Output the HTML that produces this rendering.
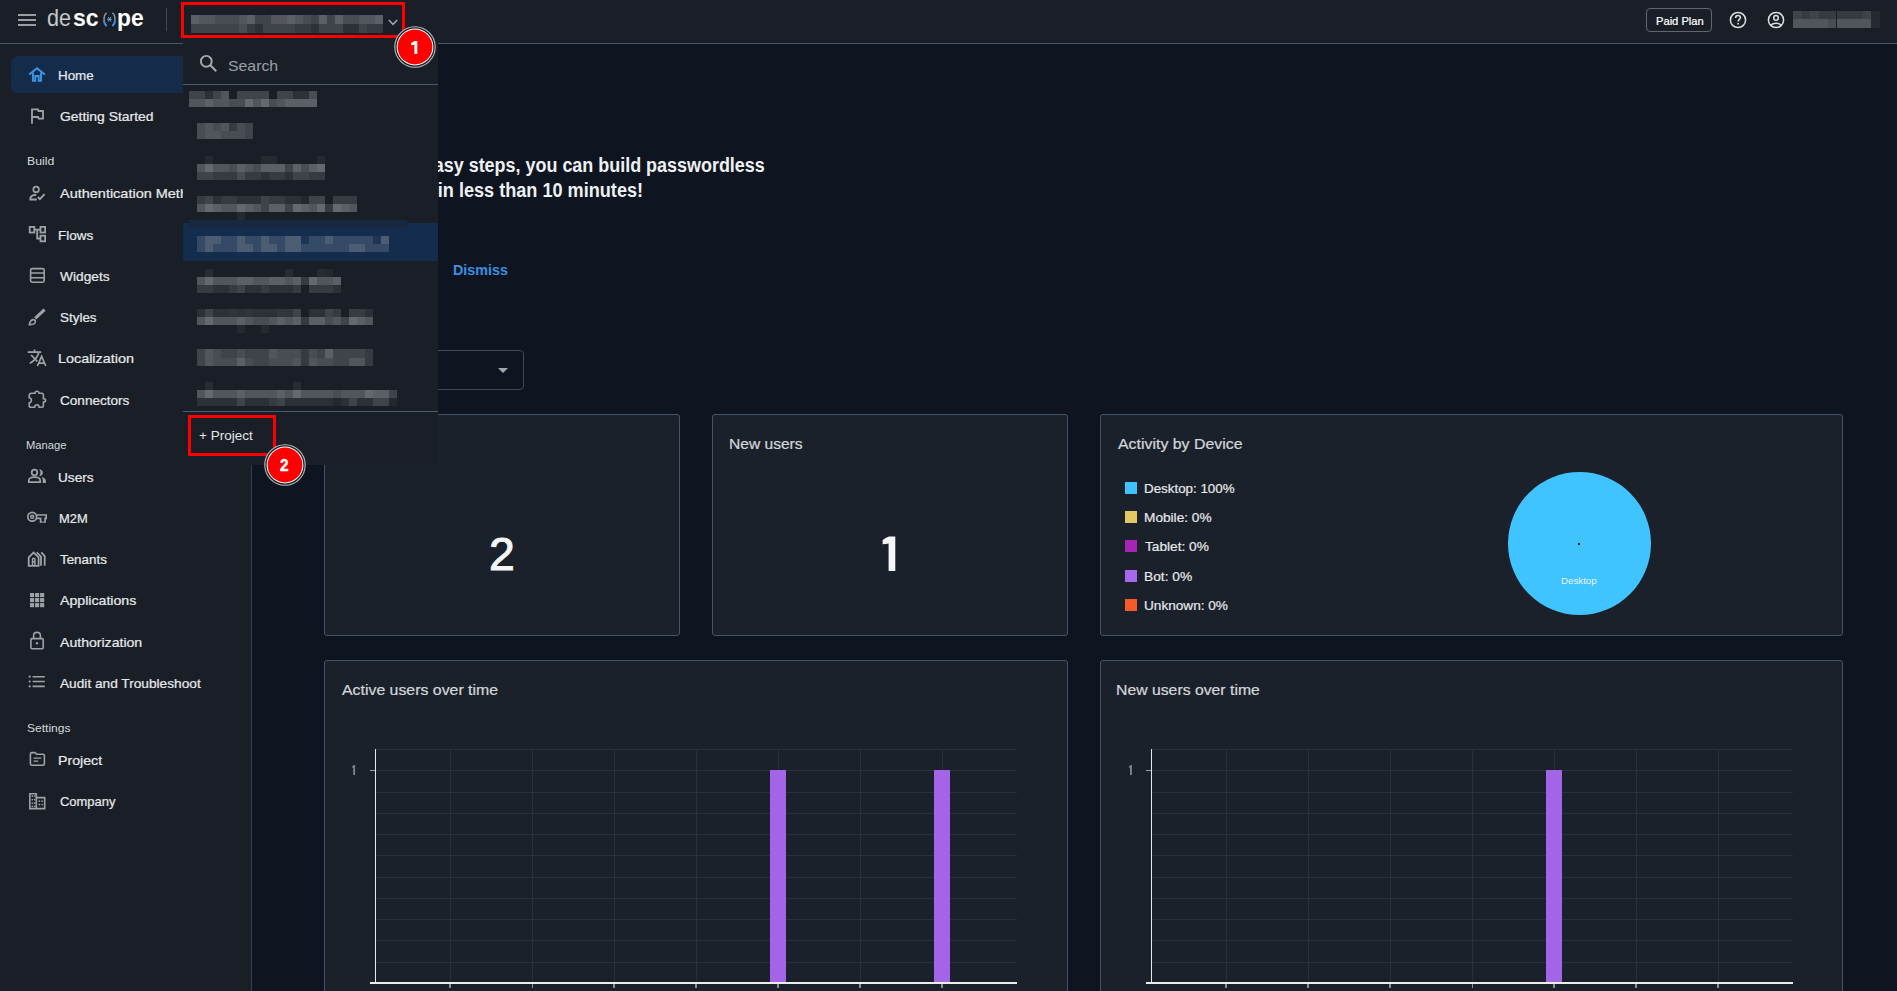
<!DOCTYPE html>
<html><head><meta charset="utf-8">
<style>
*{box-sizing:border-box;margin:0;padding:0}
html,body{width:1897px;height:991px;overflow:hidden;background:#0f1520;font-family:"Liberation Sans",sans-serif;position:relative}
.a{position:absolute}
.t{position:absolute;white-space:pre;transform-origin:0 0;font-family:"Liberation Sans",sans-serif}
.b{position:absolute}
svg{position:absolute;overflow:visible}
</style></head><body>
<!-- header -->
<div class="a" style="left:0;top:0;width:1897px;height:43px;background:#1a1f27"></div>
<div class="a" style="left:0;top:43px;width:1897px;height:1px;background:#46576a"></div>
<!-- sidebar -->
<div class="a" style="left:0;top:44px;width:251px;height:947px;background:#1a1f27"></div>
<div class="a" style="left:251px;top:44px;width:1px;height:947px;background:#34414f"></div>
<!-- hamburger -->
<div class="a" style="left:18px;top:14px;width:18px;height:2px;background:#9a9ea4"></div>
<div class="a" style="left:18px;top:19px;width:18px;height:2px;background:#9a9ea4"></div>
<div class="a" style="left:18px;top:24px;width:18px;height:2px;background:#9a9ea4"></div>
<!-- logo -->
<div class="t" style="left:46.6px;top:6.2px;font-size:24px;line-height:24px;font-weight:400;color:#c4c8cc;transform:scale(0.9,1.0)">de</div>
<div class="t" style="left:73.2px;top:6.2px;font-size:24px;line-height:24px;font-weight:700;color:#ffffff;transform:scale(0.96,1.0)">sc</div>
<div class="t" style="left:117.2px;top:6.2px;font-size:24px;line-height:24px;font-weight:700;color:#ffffff;transform:scale(0.95,1.0)">pe</div>
<svg style="left:101.5px;top:11.8px" width="15" height="15" viewBox="0 0 15 15">
 <path d="M4.6 0.8 C1.2 3.2 1.2 11.3 4.6 13.9" fill="none" stroke="#8d9298" stroke-width="1.5"/>
 <path d="M1.9 8.8 C2.2 11.2 3.1 12.8 4.6 13.9" fill="none" stroke="#2f8ee8" stroke-width="1.8"/>
 <path d="M10.4 0.8 C13.8 3.2 13.8 11.3 10.4 13.9" fill="none" stroke="#8d9298" stroke-width="1.5"/>
 <path d="M13.1 8.8 C12.8 11.2 11.9 12.8 10.4 13.9" fill="none" stroke="#2f8ee8" stroke-width="1.8"/>
 <path d="M5.2 7.3 H9.8 M6.2 5 L8.8 9.6 M8.8 5 L6.2 9.6" stroke="#63b6f2" stroke-width="0.9"/>
</svg>
<div class="a" style="left:166px;top:8px;width:1px;height:23px;background:#3d4a57"></div>

<!-- top right -->
<div class="a" style="left:1646px;top:8px;width:66px;height:24px;border:1px solid #62666c;border-radius:4px"></div>
<svg style="left:1729px;top:11px" width="18" height="18" viewBox="0 0 18 18">
 <circle cx="9" cy="9" r="7.6" fill="none" stroke="#dcdfe2" stroke-width="1.5"/>
 <path d="M6.6 6.9 C6.6 5.4 7.7 4.6 9 4.6 C10.4 4.6 11.4 5.5 11.4 6.7 C11.4 8.3 9.2 8.5 9.2 10.6" fill="none" stroke="#dcdfe2" stroke-width="1.5"/>
 <rect x="8.35" y="11.9" width="1.6" height="1.6" fill="#dcdfe2"/>
</svg>
<svg style="left:1767px;top:11px" width="18" height="18" viewBox="0 0 18 18">
 <circle cx="9" cy="9" r="7.6" fill="none" stroke="#dcdfe2" stroke-width="1.5"/>
 <circle cx="9" cy="6.9" r="2.3" fill="none" stroke="#dcdfe2" stroke-width="1.5"/>
 <path d="M3.6 14.2 C5 12.8 7 12.2 9 12.2 C11 12.2 13 12.8 14.4 14.2" fill="none" stroke="#dcdfe2" stroke-width="1.5"/>
</svg>

<!-- sidebar active -->
<div class="a" style="left:11px;top:56px;width:200px;height:37px;background:#142b49;border-radius:6px"></div>

<!-- sidebar icons -->
<svg style="left:24px;top:60px" width="30" height="30" viewBox="0 0 30 30">
 <path d="M5.2 14.6 L13 8.2 L20.8 14.6" fill="none" stroke="#3b97ea" stroke-width="1.9"/>
 <path d="M9 12.6 V20.7 H11.3 V16 H14.7 V20.7 H17 V12.6" fill="none" stroke="#3b97ea" stroke-width="1.9"/>
</svg>
<svg style="left:28px;top:106px" width="18" height="20" viewBox="0 0 18 20">
 <path d="M4 17.7 V3.3 H10 L10.5 5 H15 V12.6 H10.6 L10.1 11 H4" fill="none" stroke="#9ea2a8" stroke-width="1.8"/>
</svg>
<svg style="left:28px;top:185px" width="18" height="16" viewBox="0 0 18 16">
 <circle cx="8.1" cy="4.4" r="2.8" fill="none" stroke="#9ea2a8" stroke-width="1.7"/>
 <path d="M8.3 9.8 C5.6 9.8 2.4 11 2.4 13.3 V14.5 H8.8" fill="none" stroke="#9ea2a8" stroke-width="1.9"/>
 <path d="M9.9 12 L11.9 14.2 L16.6 9.2" fill="none" stroke="#9ea2a8" stroke-width="1.9"/>
</svg>
<svg style="left:28px;top:225px" width="18" height="18" viewBox="0 0 18 18">
 <rect x="1.7" y="1.9" width="4.6" height="5.6" fill="none" stroke="#9ea2a8" stroke-width="1.8"/>
 <rect x="12.5" y="1.9" width="4.6" height="5.6" fill="none" stroke="#9ea2a8" stroke-width="1.8"/>
 <rect x="12.5" y="10.7" width="4.6" height="5.6" fill="none" stroke="#9ea2a8" stroke-width="1.8"/>
 <path d="M6.3 4.7 H12.5 M9.2 4.7 V13.5 H12.5" fill="none" stroke="#9ea2a8" stroke-width="1.8"/>
</svg>
<svg style="left:28px;top:266px" width="18" height="18" viewBox="0 0 18 18">
 <rect x="2.6" y="2.6" width="13.6" height="13.6" rx="1.6" fill="none" stroke="#9ea2a8" stroke-width="1.6"/>
 <path d="M2.6 7.1 H16.2 M2.6 11.7 H16.2" stroke="#9ea2a8" stroke-width="1.5"/>
</svg>
<svg style="left:24px;top:304px" width="26" height="26" viewBox="0 0 26 26">
 <path d="M11.2 14.3 L20.6 5.7" stroke="#9ea2a8" stroke-width="3.1"/>
 <path d="M5.3 20.6 C5.7 18.5 6.7 16 9 15.6 C10.6 15.4 11.5 16.5 11.3 18 C11 19.9 8.6 20.8 5.3 20.6 Z" fill="none" stroke="#9ea2a8" stroke-width="1.6"/>
</svg>
<svg style="left:24px;top:345px" width="26" height="26" viewBox="0 0 26 26">
 <path d="M3.8 7.1 H17.2" stroke="#9ea2a8" stroke-width="1.8"/>
 <path d="M10.5 4.5 V7" stroke="#9ea2a8" stroke-width="1.7"/>
 <path d="M7.1 10 L13.3 16.3 M14.7 7.9 C13.6 11.8 10.4 15.5 5.8 18.4" fill="none" stroke="#9ea2a8" stroke-width="1.7"/>
 <path d="M13.4 21 L17.6 11.3 L21.8 21 M14.9 18.1 H20.3" fill="none" stroke="#9ea2a8" stroke-width="1.7"/>
</svg>
<svg style="left:27px;top:390px" width="20" height="19" viewBox="0 0 20 19">
 <path d="M2.2 5.6 C2.2 4.2 3 3.3 4.5 3.3 H8 C8.1 2 8.8 1.2 10 1.2 C11.2 1.2 11.9 2 12 3.3 H14.6 C15.6 3.3 16.4 4 16.4 5 V8.8 C17.9 8.8 18.6 9.6 18.6 10.4 C18.6 11.3 17.9 12 16.4 12 V15.6 C16.4 16.6 15.6 17.3 14.6 17.3 H12.1 C12 15.8 11.1 14.8 9.9 14.8 C8.7 14.8 7.8 15.8 7.7 17.3 H4 C2.9 17.3 2.2 16.5 2.2 15.5 V12.8 C3.6 12.7 4.4 11.6 4.4 10.3 C4.4 9 3.6 7.9 2.2 7.8 Z" fill="none" stroke="#9ea2a8" stroke-width="1.6"/>
</svg>
<svg style="left:24px;top:464px" width="26" height="26" viewBox="0 0 26 26">
 <circle cx="10.5" cy="8.5" r="2.8" fill="none" stroke="#9ea2a8" stroke-width="1.8"/>
 <path d="M14.8 5.0 C17.1 5.3 18.9 6.8 18.9 8.7 C18.9 10.6 17.3 12.0 14.8 12.3 C15.8 11.4 16.4 10.1 16.4 8.65 C16.4 7.2 15.8 5.9 14.8 5.0 Z" fill="#9ea2a8"/>
 <path d="M4.8 18.1 V16.4 C4.8 14.2 7.8 13.1 10.5 13.1 C13.2 13.1 16.2 14.2 16.2 16.4 V18.1 Z" fill="none" stroke="#9ea2a8" stroke-width="1.8"/>
 <path d="M17.3 13.1 C19.7 13.6 21.9 14.8 21.9 16.8 V19 H18.7 V16.6 C18.7 15.1 18.2 14 17.3 13.1 Z" fill="#9ea2a8"/>
</svg>
<svg style="left:24px;top:505px" width="26" height="26" viewBox="0 0 26 26">
 <circle cx="8.2" cy="11.8" r="4.4" fill="none" stroke="#9ea2a8" stroke-width="1.7"/>
 <circle cx="8.2" cy="11.8" r="1.6" fill="#5d6269" stroke="#9ea2a8" stroke-width="1.3"/>
 <path d="M12.9 10.0 H22.2 V13.4 H21.1 V17.0 H16.6 V13.4 H12.9" fill="none" stroke="#9ea2a8" stroke-width="1.7"/>
 <path d="M18.9 17.2 V14.8" stroke="#1a1f27" stroke-width="1.1"/>
</svg>
<svg style="left:24px;top:546px" width="26" height="26" viewBox="0 0 26 26">
 <path d="M4.7 19.8 V11.3 L9.6 6.5 L14.6 11.3 V19.8 Z" fill="none" stroke="#9ea2a8" stroke-width="1.8"/>
 <path d="M8.5 19.2 V13.5 C8.5 12.7 9 12.2 9.7 12.2 C10.4 12.2 10.9 12.7 10.9 13.5 V19.2 M8.5 15.8 H10.9" fill="none" stroke="#9ea2a8" stroke-width="1.5"/>
 <path d="M12.7 6.3 L17 10.7 V19.8 M17.3 6.3 L20.7 10.1 V19.8" fill="none" stroke="#9ea2a8" stroke-width="1.8"/>
</svg>
<svg style="left:28px;top:591px" width="18" height="18" viewBox="0 0 18 18"><g fill="#9ea2a8"><rect x="2.00" y="2.00" width="4.1" height="4.1"/><rect x="7.05" y="2.00" width="4.1" height="4.1"/><rect x="12.10" y="2.00" width="4.1" height="4.1"/><rect x="2.00" y="7.05" width="4.1" height="4.1"/><rect x="7.05" y="7.05" width="4.1" height="4.1"/><rect x="12.10" y="7.05" width="4.1" height="4.1"/><rect x="2.00" y="12.10" width="4.1" height="4.1"/><rect x="7.05" y="12.10" width="4.1" height="4.1"/><rect x="12.10" y="12.10" width="4.1" height="4.1"/></g></svg>
<svg style="left:28px;top:630px" width="18" height="21" viewBox="0 0 18 21">
 <rect x="2.9" y="8.6" width="12.3" height="10.2" rx="1" fill="none" stroke="#9ea2a8" stroke-width="1.6"/>
 <path d="M5.6 8.6 V5.5 C5.6 3.4 7.1 2.4 9 2.4 C10.9 2.4 12.4 3.4 12.4 5.5 V8.6" fill="none" stroke="#9ea2a8" stroke-width="1.6"/>
 <circle cx="9" cy="13.3" r="1.2" fill="#9ea2a8"/>
</svg>
<svg style="left:27px;top:674px" width="20" height="16" viewBox="0 0 20 16">
 <g fill="#9ea2a8"><circle cx="2.7" cy="2.7" r="1.1"/><circle cx="2.7" cy="7.5" r="1.1"/><circle cx="2.7" cy="12.4" r="1.1"/></g>
 <path d="M5.6 2.7 H17.8 M5.6 7.5 H17.8 M5.6 12.4 H17.8" stroke="#9ea2a8" stroke-width="1.6"/>
</svg>
<svg style="left:28px;top:751px" width="18" height="16" viewBox="0 0 18 16">
 <path d="M2.4 3 C2.4 2.1 2.9 1.6 3.8 1.6 H7 L8.6 3.2 H15 C15.9 3.2 16.4 3.7 16.4 4.6 V12.8 C16.4 13.7 15.9 14.2 15 14.2 H3.8 C2.9 14.2 2.4 13.7 2.4 12.8 Z" fill="none" stroke="#9ea2a8" stroke-width="1.6"/>
 <path d="M5.6 7.1 H13.3 M5.6 10.1 H10.2" stroke="#9ea2a8" stroke-width="1.4"/>
</svg>
<svg style="left:28px;top:792px" width="18" height="18" viewBox="0 0 18 18">
 <path d="M1.8 16.6 V1.8 H8.3 V5.6 H16.7 V16.6 Z M8.3 5.6 V16.6" fill="none" stroke="#9ea2a8" stroke-width="1.6"/>
 <g fill="#9ea2a8"><rect x="3.6" y="3.4" width="1.5" height="1.5"/><rect x="5.9" y="3.4" width="1.5" height="1.5"/>
 <rect x="3.6" y="6.9" width="1.5" height="1.5"/><rect x="5.9" y="6.9" width="1.5" height="1.5"/>
 <rect x="3.6" y="10.4" width="1.5" height="1.5"/><rect x="5.9" y="10.4" width="1.5" height="1.5"/>
 <rect x="3.6" y="13.6" width="1.5" height="1.5"/><rect x="5.9" y="13.6" width="1.5" height="1.5"/>
 <rect x="10.6" y="8.4" width="1.5" height="1.5"/><rect x="13.3" y="8.4" width="1.5" height="1.5"/>
 <rect x="10.6" y="11.8" width="1.5" height="1.5"/><rect x="13.3" y="11.8" width="1.5" height="1.5"/></g>
</svg>

<!-- main content -->
<!-- select -->
<div class="a" style="left:300px;top:350px;width:224px;height:40px;border:1px solid #3f4853;border-radius:4px"></div>
<svg style="left:498px;top:368px" width="10" height="5" viewBox="0 0 10 5"><path d="M0 0 H10 L5 5 Z" fill="#a2a6ab"/></svg>

<!-- cards -->
<div class="a" style="left:324px;top:414px;width:356px;height:222px;background:#1b212a;border:1px solid #42546a;border-radius:3px"></div>
<div class="a" style="left:712px;top:414px;width:356px;height:222px;background:#1b212a;border:1px solid #42546a;border-radius:3px"></div>
<div class="a" style="left:1100px;top:414px;width:743px;height:222px;background:#1b212a;border:1px solid #42546a;border-radius:3px"></div>
<div class="a" style="left:324px;top:660px;width:744px;height:340px;background:#1b212a;border:1px solid #42546a;border-radius:3px"></div>
<div class="a" style="left:1100px;top:660px;width:743px;height:340px;background:#1b212a;border:1px solid #42546a;border-radius:3px"></div>

<!-- legend squares -->
<div class="a" style="left:1125px;top:482px;width:12px;height:12px;background:#3ec3fa"></div>
<div class="a" style="left:1125px;top:511px;width:12px;height:12px;background:#e1c862"></div>
<div class="a" style="left:1125px;top:540px;width:12px;height:12px;background:#a526b5"></div>
<div class="a" style="left:1125px;top:570px;width:12px;height:12px;background:#a66af0"></div>
<div class="a" style="left:1125px;top:599px;width:12px;height:12px;background:#f55a2a"></div>
<!-- pie -->
<div class="a" style="left:1507.5px;top:472.3px;width:143px;height:143px;border-radius:50%;background:#40c4ff"></div>
<div class="a" style="left:1578px;top:543px;width:2px;height:2px;background:#111"></div>

<div class="a" style="left:375px;top:749.0px;width:642px;height:1px;background:#2a3039"></div>
<div class="a" style="left:375px;top:770.0px;width:642px;height:1px;background:#2a3039"></div>
<div class="a" style="left:375px;top:792.0px;width:642px;height:1px;background:#2a3039"></div>
<div class="a" style="left:375px;top:813.0px;width:642px;height:1px;background:#2a3039"></div>
<div class="a" style="left:375px;top:834.0px;width:642px;height:1px;background:#2a3039"></div>
<div class="a" style="left:375px;top:854.5px;width:642px;height:1px;background:#2a3039"></div>
<div class="a" style="left:375px;top:876.5px;width:642px;height:1px;background:#2a3039"></div>
<div class="a" style="left:375px;top:897.5px;width:642px;height:1px;background:#2a3039"></div>
<div class="a" style="left:375px;top:918.5px;width:642px;height:1px;background:#2a3039"></div>
<div class="a" style="left:375px;top:940.0px;width:642px;height:1px;background:#2a3039"></div>
<div class="a" style="left:375px;top:961.5px;width:642px;height:1px;background:#2a3039"></div>
<div class="a" style="left:449.8px;top:749px;width:1px;height:233px;background:#2a3039"></div>
<div class="a" style="left:532.0px;top:749px;width:1px;height:233px;background:#2a3039"></div>
<div class="a" style="left:613.9px;top:749px;width:1px;height:233px;background:#2a3039"></div>
<div class="a" style="left:695.7px;top:749px;width:1px;height:233px;background:#2a3039"></div>
<div class="a" style="left:777.5px;top:749px;width:1px;height:233px;background:#2a3039"></div>
<div class="a" style="left:859.8px;top:749px;width:1px;height:233px;background:#2a3039"></div>
<div class="a" style="left:941.6px;top:749px;width:1px;height:233px;background:#2a3039"></div>
<div class="a" style="left:770px;top:770px;width:16px;height:212px;background:#a464e8"></div>
<div class="a" style="left:934px;top:770px;width:16px;height:212px;background:#a464e8"></div>
<div class="a" style="left:375px;top:749px;width:1px;height:235px;background:#e8e8e8"></div>
<div class="a" style="left:370px;top:982px;width:647px;height:2px;background:#ececec"></div>
<div class="a" style="left:370px;top:769.5px;width:5px;height:1.5px;background:#9aa0a6"></div>
<div class="a" style="left:449.3px;top:984px;width:1.5px;height:4px;background:#8a9096"></div>
<div class="a" style="left:531.5px;top:984px;width:1.5px;height:4px;background:#8a9096"></div>
<div class="a" style="left:613.4px;top:984px;width:1.5px;height:4px;background:#8a9096"></div>
<div class="a" style="left:695.2px;top:984px;width:1.5px;height:4px;background:#8a9096"></div>
<div class="a" style="left:777.0px;top:984px;width:1.5px;height:4px;background:#8a9096"></div>
<div class="a" style="left:859.3px;top:984px;width:1.5px;height:4px;background:#8a9096"></div>
<div class="a" style="left:941.1px;top:984px;width:1.5px;height:4px;background:#8a9096"></div>
<div class="a" style="left:1151px;top:749.0px;width:642px;height:1px;background:#2a3039"></div>
<div class="a" style="left:1151px;top:770.0px;width:642px;height:1px;background:#2a3039"></div>
<div class="a" style="left:1151px;top:792.0px;width:642px;height:1px;background:#2a3039"></div>
<div class="a" style="left:1151px;top:813.0px;width:642px;height:1px;background:#2a3039"></div>
<div class="a" style="left:1151px;top:834.0px;width:642px;height:1px;background:#2a3039"></div>
<div class="a" style="left:1151px;top:854.5px;width:642px;height:1px;background:#2a3039"></div>
<div class="a" style="left:1151px;top:876.5px;width:642px;height:1px;background:#2a3039"></div>
<div class="a" style="left:1151px;top:897.5px;width:642px;height:1px;background:#2a3039"></div>
<div class="a" style="left:1151px;top:918.5px;width:642px;height:1px;background:#2a3039"></div>
<div class="a" style="left:1151px;top:940.0px;width:642px;height:1px;background:#2a3039"></div>
<div class="a" style="left:1151px;top:961.5px;width:642px;height:1px;background:#2a3039"></div>
<div class="a" style="left:1225.7px;top:749px;width:1px;height:233px;background:#2a3039"></div>
<div class="a" style="left:1307.8px;top:749px;width:1px;height:233px;background:#2a3039"></div>
<div class="a" style="left:1389.9px;top:749px;width:1px;height:233px;background:#2a3039"></div>
<div class="a" style="left:1472.0px;top:749px;width:1px;height:233px;background:#2a3039"></div>
<div class="a" style="left:1553.6px;top:749px;width:1px;height:233px;background:#2a3039"></div>
<div class="a" style="left:1635.7px;top:749px;width:1px;height:233px;background:#2a3039"></div>
<div class="a" style="left:1717.8px;top:749px;width:1px;height:233px;background:#2a3039"></div>
<div class="a" style="left:1546px;top:770px;width:16px;height:212px;background:#a464e8"></div>
<div class="a" style="left:1151px;top:749px;width:1px;height:235px;background:#e8e8e8"></div>
<div class="a" style="left:1146px;top:982px;width:647px;height:2px;background:#ececec"></div>
<div class="a" style="left:1146px;top:769.5px;width:5px;height:1.5px;background:#9aa0a6"></div>
<div class="a" style="left:1225.2px;top:984px;width:1.5px;height:4px;background:#8a9096"></div>
<div class="a" style="left:1307.3px;top:984px;width:1.5px;height:4px;background:#8a9096"></div>
<div class="a" style="left:1389.4px;top:984px;width:1.5px;height:4px;background:#8a9096"></div>
<div class="a" style="left:1471.5px;top:984px;width:1.5px;height:4px;background:#8a9096"></div>
<div class="a" style="left:1553.1px;top:984px;width:1.5px;height:4px;background:#8a9096"></div>
<div class="a" style="left:1635.2px;top:984px;width:1.5px;height:4px;background:#8a9096"></div>
<div class="a" style="left:1717.3px;top:984px;width:1.5px;height:4px;background:#8a9096"></div>
<!-- ones -->
<svg style="left:0;top:0" width="1" height="1"><path d="M882.6 540.2 C884.6 538.6 886.6 537.3 889 536.6 H895.3 V571 H888.6 V543.5 C886.8 543.9 884.6 544.2 882.6 544.2 Z" fill="#f4f6f8"/>
<path d="M352.2 766.6 C352.8 765.8 353.4 765.2 354.2 765 H355.1 V775 H353.2 V767.4 C352.9 767.6 352.5 767.7 352.2 767.7 Z" fill="#7d838b"/>
<path d="M1129.0 766.6 C1129.6 765.8 1130.2 765.2 1131.0 765 H1131.9 V775 H1130.0 V767.4 C1129.7 767.6 1129.3 767.7 1129.0 767.7 Z" fill="#7d838b"/></svg>


<div class="t" style="left:58.47px;top:69.00px;font-size:13px;line-height:13px;font-weight:400;color:#e6e8eb;transform:scaleX(1.0294);-webkit-text-stroke:0.22px #e6e8eb;">Home</div>
<div class="t" style="left:59.50px;top:110.00px;font-size:13px;line-height:13px;font-weight:400;color:#e6e8eb;transform:scaleX(1.0690);-webkit-text-stroke:0.22px #e6e8eb;">Getting Started</div>
<div class="t" style="left:59.50px;top:187.20px;font-size:13px;line-height:13px;font-weight:400;color:#e6e8eb;transform:scaleX(1.1134);-webkit-text-stroke:0.22px #e6e8eb;">Authentication Methods</div>
<div class="t" style="left:58.46px;top:228.70px;font-size:13px;line-height:13px;font-weight:400;color:#e6e8eb;transform:scaleX(1.0424);-webkit-text-stroke:0.22px #e6e8eb;">Flows</div>
<div class="t" style="left:59.50px;top:269.70px;font-size:13px;line-height:13px;font-weight:400;color:#e6e8eb;transform:scaleX(1.0553);-webkit-text-stroke:0.22px #e6e8eb;">Widgets</div>
<div class="t" style="left:59.50px;top:310.80px;font-size:13px;line-height:13px;font-weight:400;color:#e6e8eb;transform:scaleX(1.0333);-webkit-text-stroke:0.22px #e6e8eb;">Styles</div>
<div class="t" style="left:58.39px;top:352.00px;font-size:13px;line-height:13px;font-weight:400;color:#e6e8eb;transform:scaleX(1.1060);-webkit-text-stroke:0.22px #e6e8eb;">Localization</div>
<div class="t" style="left:59.50px;top:393.70px;font-size:13px;line-height:13px;font-weight:400;color:#e6e8eb;transform:scaleX(1.0433);-webkit-text-stroke:0.22px #e6e8eb;">Connectors</div>
<div class="t" style="left:58.45px;top:471.00px;font-size:13px;line-height:13px;font-weight:400;color:#e6e8eb;transform:scaleX(1.0485);-webkit-text-stroke:0.22px #e6e8eb;">Users</div>
<div class="t" style="left:58.51px;top:512.00px;font-size:13px;line-height:13px;font-weight:400;color:#e6e8eb;transform:scaleX(0.9926);-webkit-text-stroke:0.22px #e6e8eb;">M2M</div>
<div class="t" style="left:59.50px;top:552.70px;font-size:13px;line-height:13px;font-weight:400;color:#e6e8eb;transform:scaleX(1.0283);-webkit-text-stroke:0.22px #e6e8eb;">Tenants</div>
<div class="t" style="left:59.50px;top:594.20px;font-size:13px;line-height:13px;font-weight:400;color:#e6e8eb;transform:scaleX(1.0886);-webkit-text-stroke:0.22px #e6e8eb;">Applications</div>
<div class="t" style="left:59.50px;top:636.00px;font-size:13px;line-height:13px;font-weight:400;color:#e6e8eb;transform:scaleX(1.0829);-webkit-text-stroke:0.22px #e6e8eb;">Authorization</div>
<div class="t" style="left:59.50px;top:676.80px;font-size:13px;line-height:13px;font-weight:400;color:#e6e8eb;transform:scaleX(1.0522);-webkit-text-stroke:0.22px #e6e8eb;">Audit and Troubleshoot</div>
<div class="t" style="left:58.41px;top:753.70px;font-size:13px;line-height:13px;font-weight:400;color:#e6e8eb;transform:scaleX(1.0900);-webkit-text-stroke:0.22px #e6e8eb;">Project</div>
<div class="t" style="left:59.50px;top:794.80px;font-size:13px;line-height:13px;font-weight:400;color:#e6e8eb;transform:scaleX(0.9964);-webkit-text-stroke:0.22px #e6e8eb;">Company</div>
<div class="t" style="left:27.09px;top:156.00px;font-size:11px;line-height:11px;font-weight:400;color:#d5d9dd;transform:scaleX(1.1130);">Build</div>
<div class="t" style="left:26.28px;top:439.80px;font-size:11px;line-height:11px;font-weight:400;color:#d5d9dd;transform:scaleX(1.0179);">Manage</div>
<div class="t" style="left:27.20px;top:722.70px;font-size:11px;line-height:11px;font-weight:400;color:#d5d9dd;transform:scaleX(1.0950);">Settings</div>
<div class="t" style="left:227.95px;top:58.00px;font-size:15px;line-height:15px;font-weight:400;color:#9b9fa5;transform:scaleX(1.0543);z-index:15;">Search</div>
<div class="t" style="left:199.10px;top:429.00px;font-size:13px;line-height:13px;font-weight:400;color:#e3e6e9;transform:scaleX(1.0404);z-index:15;">+ Project</div>
<div class="t" style="left:352.77px;top:154.80px;font-size:20px;line-height:20px;font-weight:700;color:#eef0f2;transform:scaleX(0.8970);">In a few easy steps, you can build passwordless</div>
<div class="t" style="left:309.33px;top:180.00px;font-size:20px;line-height:20px;font-weight:700;color:#eef0f2;transform:scaleX(0.9054);">authentication in less than 10 minutes!</div>
<div class="t" style="left:453.24px;top:262.00px;font-size:15px;line-height:15px;font-weight:700;color:#3b8fe0;transform:scaleX(0.9571);">Dismiss</div>
<div class="t" style="left:729.26px;top:436.00px;font-size:15px;line-height:15px;font-weight:400;color:#d3d7db;transform:scaleX(1.0386);-webkit-text-stroke:0.22px #d3d7db;">New users</div>
<div class="t" style="left:488.53px;top:529.80px;font-size:47px;line-height:47px;font-weight:400;color:#f4f6f8;transform:scaleX(0.9870);-webkit-text-stroke:1.0px #f4f6f8;">2</div>
<div class="t" style="left:1118.00px;top:436.30px;font-size:15px;line-height:15px;font-weight:400;color:#d3d7db;transform:scaleX(1.0598);-webkit-text-stroke:0.22px #d3d7db;">Activity by Device</div>
<div class="t" style="left:1143.77px;top:482.00px;font-size:13px;line-height:13px;font-weight:400;color:#e6e8eb;transform:scaleX(1.0276);-webkit-text-stroke:0.2px #e6e8eb;">Desktop: 100%</div>
<div class="t" style="left:1143.75px;top:511.00px;font-size:13px;line-height:13px;font-weight:400;color:#e6e8eb;transform:scaleX(1.0508);-webkit-text-stroke:0.2px #e6e8eb;">Mobile: 0%</div>
<div class="t" style="left:1144.80px;top:540.20px;font-size:13px;line-height:13px;font-weight:400;color:#e6e8eb;transform:scaleX(1.0525);-webkit-text-stroke:0.2px #e6e8eb;">Tablet: 0%</div>
<div class="t" style="left:1143.74px;top:569.50px;font-size:13px;line-height:13px;font-weight:400;color:#e6e8eb;transform:scaleX(1.0578);-webkit-text-stroke:0.2px #e6e8eb;">Bot: 0%</div>
<div class="t" style="left:1143.75px;top:598.50px;font-size:13px;line-height:13px;font-weight:400;color:#e6e8eb;transform:scaleX(1.0468);-webkit-text-stroke:0.2px #e6e8eb;">Unknown: 0%</div>
<div class="t" style="left:1560.90px;top:575.90px;font-size:9.5px;line-height:9.5px;font-weight:400;color:#eaf2f8;transform:scaleX(1.0229);">Desktop</div>
<div class="t" style="left:342.40px;top:681.90px;font-size:15px;line-height:15px;font-weight:400;color:#d3d7db;transform:scaleX(1.0578);-webkit-text-stroke:0.22px #d3d7db;">Active users over time</div>
<div class="t" style="left:1116.35px;top:681.70px;font-size:15px;line-height:15px;font-weight:400;color:#d3d7db;transform:scaleX(1.0519);-webkit-text-stroke:0.22px #d3d7db;">New users over time</div>
<div class="t" style="left:1655.80px;top:15.90px;font-size:11.5px;line-height:11.5px;font-weight:400;color:#ffffff;transform:scaleX(0.9694);-webkit-text-stroke:0.22px #ffffff;">Paid Plan</div>
<div class="t" style="left:280.30px;top:456.90px;font-size:17px;line-height:17px;font-weight:700;color:#ffffff;transform:scaleX(0.9000);z-index:60;-webkit-text-stroke:0.5px #ffffff;">2</div>

<!-- dropdown -->
<div class="a" style="left:183px;top:43px;width:255px;height:422px;background:#1a1f27;z-index:10"></div>
<div class="a" style="left:183px;top:84px;width:255px;height:1px;background:#4a5d70;z-index:11"></div>
<div class="a" style="left:183px;top:223px;width:255px;height:38px;background:#152d4c;z-index:11"></div>
<div class="a" style="left:189px;top:220px;width:218px;height:8px;background:#172840;z-index:11"></div>
<div class="a" style="left:183px;top:411px;width:255px;height:1px;background:#4a5d70;z-index:11"></div>
<svg style="left:199px;top:54px;z-index:12" width="20" height="20" viewBox="0 0 20 20">
 <circle cx="7.3" cy="7.3" r="5.4" fill="none" stroke="#a5a9ae" stroke-width="1.9"/>
 <path d="M11.3 11.3 L17.3 17.3" stroke="#a5a9ae" stroke-width="2.1"/>
</svg>
<div style="position:absolute;left:0;top:0;z-index:12"><div class="b" style="left:191.0px;top:15.0px;width:8.0px;height:9.0px;background:rgb(91,95,102)"></div><div class="b" style="left:199.0px;top:15.0px;width:8.0px;height:9.0px;background:rgb(82,86,92)"></div><div class="b" style="left:207.0px;top:15.0px;width:8.0px;height:9.0px;background:rgb(82,86,92)"></div><div class="b" style="left:215.0px;top:15.0px;width:8.0px;height:9.0px;background:rgb(72,77,83)"></div><div class="b" style="left:223.0px;top:15.0px;width:8.0px;height:9.0px;background:rgb(72,77,83)"></div><div class="b" style="left:231.0px;top:15.0px;width:8.0px;height:9.0px;background:rgb(72,77,83)"></div><div class="b" style="left:239.0px;top:15.0px;width:8.0px;height:9.0px;background:rgb(82,86,92)"></div><div class="b" style="left:247.0px;top:15.0px;width:8.0px;height:9.0px;background:rgb(91,95,102)"></div><div class="b" style="left:255.0px;top:15.0px;width:8.0px;height:9.0px;background:rgb(63,68,74)"></div><div class="b" style="left:263.0px;top:15.0px;width:8.0px;height:9.0px;background:rgb(63,68,74)"></div><div class="b" style="left:271.0px;top:15.0px;width:8.0px;height:9.0px;background:rgb(82,86,92)"></div><div class="b" style="left:279.0px;top:15.0px;width:8.0px;height:9.0px;background:rgb(82,86,92)"></div><div class="b" style="left:287.0px;top:15.0px;width:8.0px;height:9.0px;background:rgb(91,95,102)"></div><div class="b" style="left:295.0px;top:15.0px;width:8.0px;height:9.0px;background:rgb(82,86,92)"></div><div class="b" style="left:303.0px;top:15.0px;width:8.0px;height:9.0px;background:rgb(72,77,83)"></div><div class="b" style="left:311.0px;top:15.0px;width:8.0px;height:9.0px;background:rgb(63,68,74)"></div><div class="b" style="left:319.0px;top:15.0px;width:8.0px;height:9.0px;background:rgb(91,95,102)"></div><div class="b" style="left:327.0px;top:15.0px;width:8.0px;height:9.0px;background:rgb(63,68,74)"></div><div class="b" style="left:335.0px;top:15.0px;width:8.0px;height:9.0px;background:rgb(91,95,102)"></div><div class="b" style="left:343.0px;top:15.0px;width:8.0px;height:9.0px;background:rgb(72,77,83)"></div><div class="b" style="left:351.0px;top:15.0px;width:8.0px;height:9.0px;background:rgb(72,77,83)"></div><div class="b" style="left:359.0px;top:15.0px;width:8.0px;height:9.0px;background:rgb(82,86,92)"></div><div class="b" style="left:367.0px;top:15.0px;width:8.0px;height:9.0px;background:rgb(82,86,92)"></div><div class="b" style="left:375.0px;top:15.0px;width:8.0px;height:9.0px;background:rgb(91,95,102)"></div><div class="b" style="left:191.0px;top:24.0px;width:8.0px;height:9.0px;background:rgb(63,68,74)"></div><div class="b" style="left:199.0px;top:24.0px;width:8.0px;height:9.0px;background:rgb(63,68,74)"></div><div class="b" style="left:207.0px;top:24.0px;width:8.0px;height:9.0px;background:rgb(63,68,74)"></div><div class="b" style="left:215.0px;top:24.0px;width:8.0px;height:9.0px;background:rgb(63,68,74)"></div><div class="b" style="left:223.0px;top:24.0px;width:8.0px;height:9.0px;background:rgb(63,68,74)"></div><div class="b" style="left:231.0px;top:24.0px;width:8.0px;height:9.0px;background:rgb(63,68,74)"></div><div class="b" style="left:239.0px;top:24.0px;width:8.0px;height:9.0px;background:rgb(72,77,83)"></div><div class="b" style="left:247.0px;top:24.0px;width:8.0px;height:9.0px;background:rgb(54,58,65)"></div><div class="b" style="left:255.0px;top:24.0px;width:8.0px;height:9.0px;background:rgb(44,49,56)"></div><div class="b" style="left:263.0px;top:24.0px;width:8.0px;height:9.0px;background:rgb(63,68,74)"></div><div class="b" style="left:271.0px;top:24.0px;width:8.0px;height:9.0px;background:rgb(63,68,74)"></div><div class="b" style="left:279.0px;top:24.0px;width:8.0px;height:9.0px;background:rgb(63,68,74)"></div><div class="b" style="left:287.0px;top:24.0px;width:8.0px;height:9.0px;background:rgb(63,68,74)"></div><div class="b" style="left:295.0px;top:24.0px;width:8.0px;height:9.0px;background:rgb(54,58,65)"></div><div class="b" style="left:303.0px;top:24.0px;width:8.0px;height:9.0px;background:rgb(54,58,65)"></div><div class="b" style="left:311.0px;top:24.0px;width:8.0px;height:9.0px;background:rgb(44,49,56)"></div><div class="b" style="left:319.0px;top:24.0px;width:8.0px;height:9.0px;background:rgb(63,68,74)"></div><div class="b" style="left:327.0px;top:24.0px;width:8.0px;height:9.0px;background:rgb(63,68,74)"></div><div class="b" style="left:335.0px;top:24.0px;width:8.0px;height:9.0px;background:rgb(63,68,74)"></div><div class="b" style="left:343.0px;top:24.0px;width:8.0px;height:9.0px;background:rgb(44,49,56)"></div><div class="b" style="left:351.0px;top:24.0px;width:8.0px;height:9.0px;background:rgb(44,49,56)"></div><div class="b" style="left:359.0px;top:24.0px;width:8.0px;height:9.0px;background:rgb(63,68,74)"></div><div class="b" style="left:367.0px;top:24.0px;width:8.0px;height:9.0px;background:rgb(54,58,65)"></div><div class="b" style="left:375.0px;top:24.0px;width:8.0px;height:9.0px;background:rgb(54,58,65)"></div><div class="b" style="left:1793.0px;top:11.0px;width:8.7px;height:8.3px;background:rgb(63,68,74)"></div><div class="b" style="left:1801.7px;top:11.0px;width:8.7px;height:8.3px;background:rgb(54,58,65)"></div><div class="b" style="left:1810.4px;top:11.0px;width:8.7px;height:8.3px;background:rgb(63,68,74)"></div><div class="b" style="left:1819.1px;top:11.0px;width:8.7px;height:8.3px;background:rgb(54,58,65)"></div><div class="b" style="left:1827.8px;top:11.0px;width:8.7px;height:8.3px;background:rgb(54,58,65)"></div><div class="b" style="left:1836.5px;top:11.0px;width:8.7px;height:8.3px;background:rgb(54,58,65)"></div><div class="b" style="left:1845.2px;top:11.0px;width:8.7px;height:8.3px;background:rgb(54,58,65)"></div><div class="b" style="left:1853.9px;top:11.0px;width:8.7px;height:8.3px;background:rgb(54,58,65)"></div><div class="b" style="left:1862.6px;top:11.0px;width:8.7px;height:8.3px;background:rgb(63,68,74)"></div><div class="b" style="left:1871.3px;top:11.0px;width:8.7px;height:8.3px;background:rgb(37,42,48)"></div><div class="b" style="left:1793.0px;top:19.3px;width:8.7px;height:8.3px;background:rgb(82,86,92)"></div><div class="b" style="left:1801.7px;top:19.3px;width:8.7px;height:8.3px;background:rgb(82,86,92)"></div><div class="b" style="left:1810.4px;top:19.3px;width:8.7px;height:8.3px;background:rgb(82,86,92)"></div><div class="b" style="left:1819.1px;top:19.3px;width:8.7px;height:8.3px;background:rgb(82,86,92)"></div><div class="b" style="left:1827.8px;top:19.3px;width:8.7px;height:8.3px;background:rgb(72,77,83)"></div><div class="b" style="left:1836.5px;top:19.3px;width:8.7px;height:8.3px;background:rgb(82,86,92)"></div><div class="b" style="left:1845.2px;top:19.3px;width:8.7px;height:8.3px;background:rgb(82,86,92)"></div><div class="b" style="left:1853.9px;top:19.3px;width:8.7px;height:8.3px;background:rgb(82,86,92)"></div><div class="b" style="left:1862.6px;top:19.3px;width:8.7px;height:8.3px;background:rgb(82,86,92)"></div><div class="b" style="left:1871.3px;top:19.3px;width:8.7px;height:8.3px;background:rgb(37,42,48)"></div><div class="b" style="left:189.0px;top:91.0px;width:8.0px;height:8.0px;background:rgb(63,68,74)"></div><div class="b" style="left:197.0px;top:91.0px;width:8.0px;height:8.0px;background:rgb(63,68,74)"></div><div class="b" style="left:205.0px;top:91.0px;width:8.0px;height:8.0px;background:rgb(44,49,56)"></div><div class="b" style="left:213.0px;top:91.0px;width:8.0px;height:8.0px;background:rgb(63,68,74)"></div><div class="b" style="left:221.0px;top:91.0px;width:8.0px;height:8.0px;background:rgb(82,86,92)"></div><div class="b" style="left:237.0px;top:91.0px;width:8.0px;height:8.0px;background:rgb(63,68,74)"></div><div class="b" style="left:245.0px;top:91.0px;width:8.0px;height:8.0px;background:rgb(63,68,74)"></div><div class="b" style="left:253.0px;top:91.0px;width:8.0px;height:8.0px;background:rgb(63,68,74)"></div><div class="b" style="left:261.0px;top:91.0px;width:8.0px;height:8.0px;background:rgb(63,68,74)"></div><div class="b" style="left:277.0px;top:91.0px;width:8.0px;height:8.0px;background:rgb(63,68,74)"></div><div class="b" style="left:285.0px;top:91.0px;width:8.0px;height:8.0px;background:rgb(63,68,74)"></div><div class="b" style="left:293.0px;top:91.0px;width:8.0px;height:8.0px;background:rgb(44,49,56)"></div><div class="b" style="left:301.0px;top:91.0px;width:8.0px;height:8.0px;background:rgb(44,49,56)"></div><div class="b" style="left:309.0px;top:91.0px;width:8.0px;height:8.0px;background:rgb(72,77,83)"></div><div class="b" style="left:189.0px;top:99.0px;width:8.0px;height:8.0px;background:rgb(82,86,92)"></div><div class="b" style="left:197.0px;top:99.0px;width:8.0px;height:8.0px;background:rgb(82,86,92)"></div><div class="b" style="left:205.0px;top:99.0px;width:8.0px;height:8.0px;background:rgb(91,95,102)"></div><div class="b" style="left:213.0px;top:99.0px;width:8.0px;height:8.0px;background:rgb(82,86,92)"></div><div class="b" style="left:221.0px;top:99.0px;width:8.0px;height:8.0px;background:rgb(82,86,92)"></div><div class="b" style="left:229.0px;top:99.0px;width:8.0px;height:8.0px;background:rgb(72,77,83)"></div><div class="b" style="left:237.0px;top:99.0px;width:8.0px;height:8.0px;background:rgb(72,77,83)"></div><div class="b" style="left:245.0px;top:99.0px;width:8.0px;height:8.0px;background:rgb(100,104,111)"></div><div class="b" style="left:253.0px;top:99.0px;width:8.0px;height:8.0px;background:rgb(82,86,92)"></div><div class="b" style="left:261.0px;top:99.0px;width:8.0px;height:8.0px;background:rgb(100,104,111)"></div><div class="b" style="left:269.0px;top:99.0px;width:8.0px;height:8.0px;background:rgb(72,77,83)"></div><div class="b" style="left:277.0px;top:99.0px;width:8.0px;height:8.0px;background:rgb(82,86,92)"></div><div class="b" style="left:285.0px;top:99.0px;width:8.0px;height:8.0px;background:rgb(91,95,102)"></div><div class="b" style="left:293.0px;top:99.0px;width:8.0px;height:8.0px;background:rgb(91,95,102)"></div><div class="b" style="left:301.0px;top:99.0px;width:8.0px;height:8.0px;background:rgb(91,95,102)"></div><div class="b" style="left:309.0px;top:99.0px;width:8.0px;height:8.0px;background:rgb(91,95,102)"></div><div class="b" style="left:197.0px;top:123.0px;width:8.0px;height:8.0px;background:rgb(72,77,83)"></div><div class="b" style="left:205.0px;top:123.0px;width:8.0px;height:8.0px;background:rgb(82,86,92)"></div><div class="b" style="left:213.0px;top:123.0px;width:8.0px;height:8.0px;background:rgb(72,77,83)"></div><div class="b" style="left:221.0px;top:123.0px;width:8.0px;height:8.0px;background:rgb(82,86,92)"></div><div class="b" style="left:229.0px;top:123.0px;width:8.0px;height:8.0px;background:rgb(54,58,65)"></div><div class="b" style="left:237.0px;top:123.0px;width:8.0px;height:8.0px;background:rgb(72,77,83)"></div><div class="b" style="left:245.0px;top:123.0px;width:8.0px;height:8.0px;background:rgb(63,68,74)"></div><div class="b" style="left:197.0px;top:131.0px;width:8.0px;height:8.0px;background:rgb(72,77,83)"></div><div class="b" style="left:205.0px;top:131.0px;width:8.0px;height:8.0px;background:rgb(82,86,92)"></div><div class="b" style="left:213.0px;top:131.0px;width:8.0px;height:8.0px;background:rgb(82,86,92)"></div><div class="b" style="left:221.0px;top:131.0px;width:8.0px;height:8.0px;background:rgb(72,77,83)"></div><div class="b" style="left:229.0px;top:131.0px;width:8.0px;height:8.0px;background:rgb(72,77,83)"></div><div class="b" style="left:237.0px;top:131.0px;width:8.0px;height:8.0px;background:rgb(72,77,83)"></div><div class="b" style="left:245.0px;top:131.0px;width:8.0px;height:8.0px;background:rgb(63,68,74)"></div><div class="b" style="left:197.0px;top:164.0px;width:8.0px;height:8.0px;background:rgb(82,86,92)"></div><div class="b" style="left:205.0px;top:164.0px;width:8.0px;height:8.0px;background:rgb(100,104,111)"></div><div class="b" style="left:213.0px;top:164.0px;width:8.0px;height:8.0px;background:rgb(82,86,92)"></div><div class="b" style="left:221.0px;top:164.0px;width:8.0px;height:8.0px;background:rgb(82,86,92)"></div><div class="b" style="left:229.0px;top:164.0px;width:8.0px;height:8.0px;background:rgb(72,77,83)"></div><div class="b" style="left:237.0px;top:164.0px;width:8.0px;height:8.0px;background:rgb(91,95,102)"></div><div class="b" style="left:245.0px;top:164.0px;width:8.0px;height:8.0px;background:rgb(82,86,92)"></div><div class="b" style="left:253.0px;top:164.0px;width:8.0px;height:8.0px;background:rgb(72,77,83)"></div><div class="b" style="left:261.0px;top:164.0px;width:8.0px;height:8.0px;background:rgb(91,95,102)"></div><div class="b" style="left:269.0px;top:164.0px;width:8.0px;height:8.0px;background:rgb(91,95,102)"></div><div class="b" style="left:277.0px;top:164.0px;width:8.0px;height:8.0px;background:rgb(91,95,102)"></div><div class="b" style="left:285.0px;top:164.0px;width:8.0px;height:8.0px;background:rgb(63,68,74)"></div><div class="b" style="left:293.0px;top:164.0px;width:8.0px;height:8.0px;background:rgb(91,95,102)"></div><div class="b" style="left:301.0px;top:164.0px;width:8.0px;height:8.0px;background:rgb(72,77,83)"></div><div class="b" style="left:309.0px;top:164.0px;width:8.0px;height:8.0px;background:rgb(91,95,102)"></div><div class="b" style="left:317.0px;top:164.0px;width:8.0px;height:8.0px;background:rgb(100,104,111)"></div><div class="b" style="left:197.0px;top:172.0px;width:8.0px;height:8.0px;background:rgb(63,68,74)"></div><div class="b" style="left:205.0px;top:172.0px;width:8.0px;height:8.0px;background:rgb(63,68,74)"></div><div class="b" style="left:213.0px;top:172.0px;width:8.0px;height:8.0px;background:rgb(54,58,65)"></div><div class="b" style="left:221.0px;top:172.0px;width:8.0px;height:8.0px;background:rgb(54,58,65)"></div><div class="b" style="left:229.0px;top:172.0px;width:8.0px;height:8.0px;background:rgb(54,58,65)"></div><div class="b" style="left:237.0px;top:172.0px;width:8.0px;height:8.0px;background:rgb(72,77,83)"></div><div class="b" style="left:245.0px;top:172.0px;width:8.0px;height:8.0px;background:rgb(54,58,65)"></div><div class="b" style="left:253.0px;top:172.0px;width:8.0px;height:8.0px;background:rgb(54,58,65)"></div><div class="b" style="left:261.0px;top:172.0px;width:8.0px;height:8.0px;background:rgb(44,49,56)"></div><div class="b" style="left:269.0px;top:172.0px;width:8.0px;height:8.0px;background:rgb(54,58,65)"></div><div class="b" style="left:277.0px;top:172.0px;width:8.0px;height:8.0px;background:rgb(54,58,65)"></div><div class="b" style="left:285.0px;top:172.0px;width:8.0px;height:8.0px;background:rgb(44,49,56)"></div><div class="b" style="left:293.0px;top:172.0px;width:8.0px;height:8.0px;background:rgb(63,68,74)"></div><div class="b" style="left:301.0px;top:172.0px;width:8.0px;height:8.0px;background:rgb(63,68,74)"></div><div class="b" style="left:309.0px;top:172.0px;width:8.0px;height:8.0px;background:rgb(54,58,65)"></div><div class="b" style="left:317.0px;top:172.0px;width:8.0px;height:8.0px;background:rgb(54,58,65)"></div><div class="b" style="left:205.0px;top:156.0px;width:8.0px;height:8.0px;background:rgb(37,42,48)"></div><div class="b" style="left:261.0px;top:156.0px;width:8.0px;height:8.0px;background:rgb(37,42,48)"></div><div class="b" style="left:269.0px;top:156.0px;width:8.0px;height:8.0px;background:rgb(37,42,48)"></div><div class="b" style="left:317.0px;top:156.0px;width:8.0px;height:8.0px;background:rgb(37,42,48)"></div><div class="b" style="left:197.0px;top:196.0px;width:8.0px;height:8.0px;background:rgb(54,58,65)"></div><div class="b" style="left:205.0px;top:196.0px;width:8.0px;height:8.0px;background:rgb(63,68,74)"></div><div class="b" style="left:213.0px;top:196.0px;width:8.0px;height:8.0px;background:rgb(44,49,56)"></div><div class="b" style="left:221.0px;top:196.0px;width:8.0px;height:8.0px;background:rgb(54,58,65)"></div><div class="b" style="left:229.0px;top:196.0px;width:8.0px;height:8.0px;background:rgb(54,58,65)"></div><div class="b" style="left:237.0px;top:196.0px;width:8.0px;height:8.0px;background:rgb(44,49,56)"></div><div class="b" style="left:245.0px;top:196.0px;width:8.0px;height:8.0px;background:rgb(44,49,56)"></div><div class="b" style="left:253.0px;top:196.0px;width:8.0px;height:8.0px;background:rgb(44,49,56)"></div><div class="b" style="left:261.0px;top:196.0px;width:8.0px;height:8.0px;background:rgb(63,68,74)"></div><div class="b" style="left:269.0px;top:196.0px;width:8.0px;height:8.0px;background:rgb(54,58,65)"></div><div class="b" style="left:277.0px;top:196.0px;width:8.0px;height:8.0px;background:rgb(54,58,65)"></div><div class="b" style="left:285.0px;top:196.0px;width:8.0px;height:8.0px;background:rgb(44,49,56)"></div><div class="b" style="left:293.0px;top:196.0px;width:8.0px;height:8.0px;background:rgb(44,49,56)"></div><div class="b" style="left:301.0px;top:196.0px;width:8.0px;height:8.0px;background:rgb(35,40,46)"></div><div class="b" style="left:309.0px;top:196.0px;width:8.0px;height:8.0px;background:rgb(63,68,74)"></div><div class="b" style="left:317.0px;top:196.0px;width:8.0px;height:8.0px;background:rgb(63,68,74)"></div><div class="b" style="left:333.0px;top:196.0px;width:8.0px;height:8.0px;background:rgb(54,58,65)"></div><div class="b" style="left:341.0px;top:196.0px;width:8.0px;height:8.0px;background:rgb(54,58,65)"></div><div class="b" style="left:349.0px;top:196.0px;width:8.0px;height:8.0px;background:rgb(54,58,65)"></div><div class="b" style="left:197.0px;top:204.0px;width:8.0px;height:8.0px;background:rgb(82,86,92)"></div><div class="b" style="left:205.0px;top:204.0px;width:8.0px;height:8.0px;background:rgb(100,104,111)"></div><div class="b" style="left:213.0px;top:204.0px;width:8.0px;height:8.0px;background:rgb(91,95,102)"></div><div class="b" style="left:221.0px;top:204.0px;width:8.0px;height:8.0px;background:rgb(82,86,92)"></div><div class="b" style="left:229.0px;top:204.0px;width:8.0px;height:8.0px;background:rgb(82,86,92)"></div><div class="b" style="left:237.0px;top:204.0px;width:8.0px;height:8.0px;background:rgb(100,104,111)"></div><div class="b" style="left:245.0px;top:204.0px;width:8.0px;height:8.0px;background:rgb(91,95,102)"></div><div class="b" style="left:253.0px;top:204.0px;width:8.0px;height:8.0px;background:rgb(82,86,92)"></div><div class="b" style="left:261.0px;top:204.0px;width:8.0px;height:8.0px;background:rgb(63,68,74)"></div><div class="b" style="left:269.0px;top:204.0px;width:8.0px;height:8.0px;background:rgb(91,95,102)"></div><div class="b" style="left:277.0px;top:204.0px;width:8.0px;height:8.0px;background:rgb(91,95,102)"></div><div class="b" style="left:285.0px;top:204.0px;width:8.0px;height:8.0px;background:rgb(63,68,74)"></div><div class="b" style="left:293.0px;top:204.0px;width:8.0px;height:8.0px;background:rgb(100,104,111)"></div><div class="b" style="left:301.0px;top:204.0px;width:8.0px;height:8.0px;background:rgb(91,95,102)"></div><div class="b" style="left:309.0px;top:204.0px;width:8.0px;height:8.0px;background:rgb(82,86,92)"></div><div class="b" style="left:317.0px;top:204.0px;width:8.0px;height:8.0px;background:rgb(100,104,111)"></div><div class="b" style="left:325.0px;top:204.0px;width:8.0px;height:8.0px;background:rgb(54,58,65)"></div><div class="b" style="left:333.0px;top:204.0px;width:8.0px;height:8.0px;background:rgb(100,104,111)"></div><div class="b" style="left:341.0px;top:204.0px;width:8.0px;height:8.0px;background:rgb(91,95,102)"></div><div class="b" style="left:349.0px;top:204.0px;width:8.0px;height:8.0px;background:rgb(82,86,92)"></div><div class="b" style="left:237.0px;top:212.0px;width:8.0px;height:8.0px;background:rgb(37,42,48)"></div><div class="b" style="left:197.0px;top:277.0px;width:8.0px;height:8.0px;background:rgb(82,86,92)"></div><div class="b" style="left:205.0px;top:277.0px;width:8.0px;height:8.0px;background:rgb(100,104,111)"></div><div class="b" style="left:213.0px;top:277.0px;width:8.0px;height:8.0px;background:rgb(82,86,92)"></div><div class="b" style="left:221.0px;top:277.0px;width:8.0px;height:8.0px;background:rgb(82,86,92)"></div><div class="b" style="left:229.0px;top:277.0px;width:8.0px;height:8.0px;background:rgb(82,86,92)"></div><div class="b" style="left:237.0px;top:277.0px;width:8.0px;height:8.0px;background:rgb(91,95,102)"></div><div class="b" style="left:245.0px;top:277.0px;width:8.0px;height:8.0px;background:rgb(91,95,102)"></div><div class="b" style="left:253.0px;top:277.0px;width:8.0px;height:8.0px;background:rgb(82,86,92)"></div><div class="b" style="left:261.0px;top:277.0px;width:8.0px;height:8.0px;background:rgb(82,86,92)"></div><div class="b" style="left:269.0px;top:277.0px;width:8.0px;height:8.0px;background:rgb(91,95,102)"></div><div class="b" style="left:277.0px;top:277.0px;width:8.0px;height:8.0px;background:rgb(91,95,102)"></div><div class="b" style="left:285.0px;top:277.0px;width:8.0px;height:8.0px;background:rgb(82,86,92)"></div><div class="b" style="left:293.0px;top:277.0px;width:8.0px;height:8.0px;background:rgb(91,95,102)"></div><div class="b" style="left:301.0px;top:277.0px;width:8.0px;height:8.0px;background:rgb(54,58,65)"></div><div class="b" style="left:309.0px;top:277.0px;width:8.0px;height:8.0px;background:rgb(100,104,111)"></div><div class="b" style="left:317.0px;top:277.0px;width:8.0px;height:8.0px;background:rgb(82,86,92)"></div><div class="b" style="left:325.0px;top:277.0px;width:8.0px;height:8.0px;background:rgb(82,86,92)"></div><div class="b" style="left:333.0px;top:277.0px;width:8.0px;height:8.0px;background:rgb(91,95,102)"></div><div class="b" style="left:197.0px;top:285.0px;width:8.0px;height:8.0px;background:rgb(54,58,65)"></div><div class="b" style="left:205.0px;top:285.0px;width:8.0px;height:8.0px;background:rgb(54,58,65)"></div><div class="b" style="left:213.0px;top:285.0px;width:8.0px;height:8.0px;background:rgb(44,49,56)"></div><div class="b" style="left:221.0px;top:285.0px;width:8.0px;height:8.0px;background:rgb(44,49,56)"></div><div class="b" style="left:229.0px;top:285.0px;width:8.0px;height:8.0px;background:rgb(54,58,65)"></div><div class="b" style="left:237.0px;top:285.0px;width:8.0px;height:8.0px;background:rgb(63,68,74)"></div><div class="b" style="left:245.0px;top:285.0px;width:8.0px;height:8.0px;background:rgb(44,49,56)"></div><div class="b" style="left:253.0px;top:285.0px;width:8.0px;height:8.0px;background:rgb(44,49,56)"></div><div class="b" style="left:261.0px;top:285.0px;width:8.0px;height:8.0px;background:rgb(54,58,65)"></div><div class="b" style="left:269.0px;top:285.0px;width:8.0px;height:8.0px;background:rgb(44,49,56)"></div><div class="b" style="left:277.0px;top:285.0px;width:8.0px;height:8.0px;background:rgb(44,49,56)"></div><div class="b" style="left:285.0px;top:285.0px;width:8.0px;height:8.0px;background:rgb(44,49,56)"></div><div class="b" style="left:293.0px;top:285.0px;width:8.0px;height:8.0px;background:rgb(54,58,65)"></div><div class="b" style="left:309.0px;top:285.0px;width:8.0px;height:8.0px;background:rgb(54,58,65)"></div><div class="b" style="left:317.0px;top:285.0px;width:8.0px;height:8.0px;background:rgb(54,58,65)"></div><div class="b" style="left:325.0px;top:285.0px;width:8.0px;height:8.0px;background:rgb(54,58,65)"></div><div class="b" style="left:333.0px;top:285.0px;width:8.0px;height:8.0px;background:rgb(44,49,56)"></div><div class="b" style="left:205.0px;top:269.0px;width:8.0px;height:8.0px;background:rgb(39,43,50)"></div><div class="b" style="left:285.0px;top:269.0px;width:8.0px;height:8.0px;background:rgb(39,43,50)"></div><div class="b" style="left:317.0px;top:269.0px;width:8.0px;height:8.0px;background:rgb(39,43,50)"></div><div class="b" style="left:325.0px;top:269.0px;width:8.0px;height:8.0px;background:rgb(35,40,46)"></div><div class="b" style="left:197.0px;top:309.0px;width:8.0px;height:8.0px;background:rgb(44,49,56)"></div><div class="b" style="left:205.0px;top:309.0px;width:8.0px;height:8.0px;background:rgb(63,68,74)"></div><div class="b" style="left:213.0px;top:309.0px;width:8.0px;height:8.0px;background:rgb(44,49,56)"></div><div class="b" style="left:221.0px;top:309.0px;width:8.0px;height:8.0px;background:rgb(44,49,56)"></div><div class="b" style="left:229.0px;top:309.0px;width:8.0px;height:8.0px;background:rgb(48,53,59)"></div><div class="b" style="left:237.0px;top:309.0px;width:8.0px;height:8.0px;background:rgb(44,49,56)"></div><div class="b" style="left:245.0px;top:309.0px;width:8.0px;height:8.0px;background:rgb(48,53,59)"></div><div class="b" style="left:253.0px;top:309.0px;width:8.0px;height:8.0px;background:rgb(44,49,56)"></div><div class="b" style="left:261.0px;top:309.0px;width:8.0px;height:8.0px;background:rgb(44,49,56)"></div><div class="b" style="left:269.0px;top:309.0px;width:8.0px;height:8.0px;background:rgb(44,49,56)"></div><div class="b" style="left:277.0px;top:309.0px;width:8.0px;height:8.0px;background:rgb(50,55,61)"></div><div class="b" style="left:285.0px;top:309.0px;width:8.0px;height:8.0px;background:rgb(48,53,59)"></div><div class="b" style="left:293.0px;top:309.0px;width:8.0px;height:8.0px;background:rgb(63,68,74)"></div><div class="b" style="left:309.0px;top:309.0px;width:8.0px;height:8.0px;background:rgb(44,49,56)"></div><div class="b" style="left:317.0px;top:309.0px;width:8.0px;height:8.0px;background:rgb(44,49,56)"></div><div class="b" style="left:325.0px;top:309.0px;width:8.0px;height:8.0px;background:rgb(63,68,74)"></div><div class="b" style="left:333.0px;top:309.0px;width:8.0px;height:8.0px;background:rgb(54,58,65)"></div><div class="b" style="left:349.0px;top:309.0px;width:8.0px;height:8.0px;background:rgb(54,58,65)"></div><div class="b" style="left:357.0px;top:309.0px;width:8.0px;height:8.0px;background:rgb(54,58,65)"></div><div class="b" style="left:365.0px;top:309.0px;width:8.0px;height:8.0px;background:rgb(44,49,56)"></div><div class="b" style="left:197.0px;top:317.0px;width:8.0px;height:8.0px;background:rgb(82,86,92)"></div><div class="b" style="left:205.0px;top:317.0px;width:8.0px;height:8.0px;background:rgb(100,104,111)"></div><div class="b" style="left:213.0px;top:317.0px;width:8.0px;height:8.0px;background:rgb(82,86,92)"></div><div class="b" style="left:221.0px;top:317.0px;width:8.0px;height:8.0px;background:rgb(82,86,92)"></div><div class="b" style="left:229.0px;top:317.0px;width:8.0px;height:8.0px;background:rgb(82,86,92)"></div><div class="b" style="left:237.0px;top:317.0px;width:8.0px;height:8.0px;background:rgb(91,95,102)"></div><div class="b" style="left:245.0px;top:317.0px;width:8.0px;height:8.0px;background:rgb(82,86,92)"></div><div class="b" style="left:253.0px;top:317.0px;width:8.0px;height:8.0px;background:rgb(72,77,83)"></div><div class="b" style="left:261.0px;top:317.0px;width:8.0px;height:8.0px;background:rgb(72,77,83)"></div><div class="b" style="left:269.0px;top:317.0px;width:8.0px;height:8.0px;background:rgb(82,86,92)"></div><div class="b" style="left:277.0px;top:317.0px;width:8.0px;height:8.0px;background:rgb(91,95,102)"></div><div class="b" style="left:285.0px;top:317.0px;width:8.0px;height:8.0px;background:rgb(82,86,92)"></div><div class="b" style="left:293.0px;top:317.0px;width:8.0px;height:8.0px;background:rgb(91,95,102)"></div><div class="b" style="left:301.0px;top:317.0px;width:8.0px;height:8.0px;background:rgb(54,58,65)"></div><div class="b" style="left:309.0px;top:317.0px;width:8.0px;height:8.0px;background:rgb(91,95,102)"></div><div class="b" style="left:317.0px;top:317.0px;width:8.0px;height:8.0px;background:rgb(91,95,102)"></div><div class="b" style="left:325.0px;top:317.0px;width:8.0px;height:8.0px;background:rgb(72,77,83)"></div><div class="b" style="left:333.0px;top:317.0px;width:8.0px;height:8.0px;background:rgb(82,86,92)"></div><div class="b" style="left:341.0px;top:317.0px;width:8.0px;height:8.0px;background:rgb(63,68,74)"></div><div class="b" style="left:349.0px;top:317.0px;width:8.0px;height:8.0px;background:rgb(100,104,111)"></div><div class="b" style="left:357.0px;top:317.0px;width:8.0px;height:8.0px;background:rgb(91,95,102)"></div><div class="b" style="left:365.0px;top:317.0px;width:8.0px;height:8.0px;background:rgb(82,86,92)"></div><div class="b" style="left:237.0px;top:325.0px;width:8.0px;height:8.0px;background:rgb(37,42,48)"></div><div class="b" style="left:261.0px;top:325.0px;width:8.0px;height:8.0px;background:rgb(37,42,48)"></div><div class="b" style="left:197.0px;top:349.0px;width:8.0px;height:8.5px;background:rgb(63,68,74)"></div><div class="b" style="left:205.0px;top:349.0px;width:8.0px;height:8.5px;background:rgb(82,86,92)"></div><div class="b" style="left:213.0px;top:349.0px;width:8.0px;height:8.5px;background:rgb(72,77,83)"></div><div class="b" style="left:221.0px;top:349.0px;width:8.0px;height:8.5px;background:rgb(63,68,74)"></div><div class="b" style="left:229.0px;top:349.0px;width:8.0px;height:8.5px;background:rgb(63,68,74)"></div><div class="b" style="left:237.0px;top:349.0px;width:8.0px;height:8.5px;background:rgb(72,77,83)"></div><div class="b" style="left:245.0px;top:349.0px;width:8.0px;height:8.5px;background:rgb(63,68,74)"></div><div class="b" style="left:253.0px;top:349.0px;width:8.0px;height:8.5px;background:rgb(63,68,74)"></div><div class="b" style="left:261.0px;top:349.0px;width:8.0px;height:8.5px;background:rgb(63,68,74)"></div><div class="b" style="left:269.0px;top:349.0px;width:8.0px;height:8.5px;background:rgb(82,86,92)"></div><div class="b" style="left:277.0px;top:349.0px;width:8.0px;height:8.5px;background:rgb(72,77,83)"></div><div class="b" style="left:285.0px;top:349.0px;width:8.0px;height:8.5px;background:rgb(72,77,83)"></div><div class="b" style="left:293.0px;top:349.0px;width:8.0px;height:8.5px;background:rgb(72,77,83)"></div><div class="b" style="left:301.0px;top:349.0px;width:8.0px;height:8.5px;background:rgb(54,58,65)"></div><div class="b" style="left:309.0px;top:349.0px;width:8.0px;height:8.5px;background:rgb(72,77,83)"></div><div class="b" style="left:317.0px;top:349.0px;width:8.0px;height:8.5px;background:rgb(63,68,74)"></div><div class="b" style="left:325.0px;top:349.0px;width:8.0px;height:8.5px;background:rgb(91,95,102)"></div><div class="b" style="left:333.0px;top:349.0px;width:8.0px;height:8.5px;background:rgb(63,68,74)"></div><div class="b" style="left:341.0px;top:349.0px;width:8.0px;height:8.5px;background:rgb(63,68,74)"></div><div class="b" style="left:349.0px;top:349.0px;width:8.0px;height:8.5px;background:rgb(63,68,74)"></div><div class="b" style="left:357.0px;top:349.0px;width:8.0px;height:8.5px;background:rgb(63,68,74)"></div><div class="b" style="left:365.0px;top:349.0px;width:8.0px;height:8.5px;background:rgb(54,58,65)"></div><div class="b" style="left:197.0px;top:357.5px;width:8.0px;height:8.5px;background:rgb(63,68,74)"></div><div class="b" style="left:205.0px;top:357.5px;width:8.0px;height:8.5px;background:rgb(82,86,92)"></div><div class="b" style="left:213.0px;top:357.5px;width:8.0px;height:8.5px;background:rgb(72,77,83)"></div><div class="b" style="left:221.0px;top:357.5px;width:8.0px;height:8.5px;background:rgb(72,77,83)"></div><div class="b" style="left:229.0px;top:357.5px;width:8.0px;height:8.5px;background:rgb(72,77,83)"></div><div class="b" style="left:237.0px;top:357.5px;width:8.0px;height:8.5px;background:rgb(91,95,102)"></div><div class="b" style="left:245.0px;top:357.5px;width:8.0px;height:8.5px;background:rgb(72,77,83)"></div><div class="b" style="left:253.0px;top:357.5px;width:8.0px;height:8.5px;background:rgb(63,68,74)"></div><div class="b" style="left:261.0px;top:357.5px;width:8.0px;height:8.5px;background:rgb(63,68,74)"></div><div class="b" style="left:269.0px;top:357.5px;width:8.0px;height:8.5px;background:rgb(72,77,83)"></div><div class="b" style="left:277.0px;top:357.5px;width:8.0px;height:8.5px;background:rgb(72,77,83)"></div><div class="b" style="left:285.0px;top:357.5px;width:8.0px;height:8.5px;background:rgb(72,77,83)"></div><div class="b" style="left:293.0px;top:357.5px;width:8.0px;height:8.5px;background:rgb(82,86,92)"></div><div class="b" style="left:301.0px;top:357.5px;width:8.0px;height:8.5px;background:rgb(54,58,65)"></div><div class="b" style="left:309.0px;top:357.5px;width:8.0px;height:8.5px;background:rgb(82,86,92)"></div><div class="b" style="left:317.0px;top:357.5px;width:8.0px;height:8.5px;background:rgb(72,77,83)"></div><div class="b" style="left:325.0px;top:357.5px;width:8.0px;height:8.5px;background:rgb(72,77,83)"></div><div class="b" style="left:333.0px;top:357.5px;width:8.0px;height:8.5px;background:rgb(63,68,74)"></div><div class="b" style="left:341.0px;top:357.5px;width:8.0px;height:8.5px;background:rgb(63,68,74)"></div><div class="b" style="left:349.0px;top:357.5px;width:8.0px;height:8.5px;background:rgb(82,86,92)"></div><div class="b" style="left:357.0px;top:357.5px;width:8.0px;height:8.5px;background:rgb(82,86,92)"></div><div class="b" style="left:365.0px;top:357.5px;width:8.0px;height:8.5px;background:rgb(54,58,65)"></div><div class="b" style="left:197.0px;top:390.0px;width:8.0px;height:8.0px;background:rgb(82,86,92)"></div><div class="b" style="left:205.0px;top:390.0px;width:8.0px;height:8.0px;background:rgb(100,104,111)"></div><div class="b" style="left:213.0px;top:390.0px;width:8.0px;height:8.0px;background:rgb(82,86,92)"></div><div class="b" style="left:221.0px;top:390.0px;width:8.0px;height:8.0px;background:rgb(82,86,92)"></div><div class="b" style="left:229.0px;top:390.0px;width:8.0px;height:8.0px;background:rgb(82,86,92)"></div><div class="b" style="left:237.0px;top:390.0px;width:8.0px;height:8.0px;background:rgb(91,95,102)"></div><div class="b" style="left:245.0px;top:390.0px;width:8.0px;height:8.0px;background:rgb(82,86,92)"></div><div class="b" style="left:253.0px;top:390.0px;width:8.0px;height:8.0px;background:rgb(82,86,92)"></div><div class="b" style="left:261.0px;top:390.0px;width:8.0px;height:8.0px;background:rgb(82,86,92)"></div><div class="b" style="left:269.0px;top:390.0px;width:8.0px;height:8.0px;background:rgb(82,86,92)"></div><div class="b" style="left:277.0px;top:390.0px;width:8.0px;height:8.0px;background:rgb(91,95,102)"></div><div class="b" style="left:285.0px;top:390.0px;width:8.0px;height:8.0px;background:rgb(82,86,92)"></div><div class="b" style="left:293.0px;top:390.0px;width:8.0px;height:8.0px;background:rgb(100,104,111)"></div><div class="b" style="left:301.0px;top:390.0px;width:8.0px;height:8.0px;background:rgb(82,86,92)"></div><div class="b" style="left:309.0px;top:390.0px;width:8.0px;height:8.0px;background:rgb(82,86,92)"></div><div class="b" style="left:317.0px;top:390.0px;width:8.0px;height:8.0px;background:rgb(82,86,92)"></div><div class="b" style="left:325.0px;top:390.0px;width:8.0px;height:8.0px;background:rgb(82,86,92)"></div><div class="b" style="left:333.0px;top:390.0px;width:8.0px;height:8.0px;background:rgb(72,77,83)"></div><div class="b" style="left:341.0px;top:390.0px;width:8.0px;height:8.0px;background:rgb(82,86,92)"></div><div class="b" style="left:349.0px;top:390.0px;width:8.0px;height:8.0px;background:rgb(82,86,92)"></div><div class="b" style="left:357.0px;top:390.0px;width:8.0px;height:8.0px;background:rgb(82,86,92)"></div><div class="b" style="left:365.0px;top:390.0px;width:8.0px;height:8.0px;background:rgb(100,104,111)"></div><div class="b" style="left:373.0px;top:390.0px;width:8.0px;height:8.0px;background:rgb(91,95,102)"></div><div class="b" style="left:381.0px;top:390.0px;width:8.0px;height:8.0px;background:rgb(91,95,102)"></div><div class="b" style="left:389.0px;top:390.0px;width:8.0px;height:8.0px;background:rgb(63,68,74)"></div><div class="b" style="left:197.0px;top:398.0px;width:8.0px;height:8.0px;background:rgb(44,49,56)"></div><div class="b" style="left:205.0px;top:398.0px;width:8.0px;height:8.0px;background:rgb(44,49,56)"></div><div class="b" style="left:213.0px;top:398.0px;width:8.0px;height:8.0px;background:rgb(44,49,56)"></div><div class="b" style="left:221.0px;top:398.0px;width:8.0px;height:8.0px;background:rgb(44,49,56)"></div><div class="b" style="left:229.0px;top:398.0px;width:8.0px;height:8.0px;background:rgb(44,49,56)"></div><div class="b" style="left:237.0px;top:398.0px;width:8.0px;height:8.0px;background:rgb(63,68,74)"></div><div class="b" style="left:245.0px;top:398.0px;width:8.0px;height:8.0px;background:rgb(44,49,56)"></div><div class="b" style="left:253.0px;top:398.0px;width:8.0px;height:8.0px;background:rgb(44,49,56)"></div><div class="b" style="left:261.0px;top:398.0px;width:8.0px;height:8.0px;background:rgb(44,49,56)"></div><div class="b" style="left:269.0px;top:398.0px;width:8.0px;height:8.0px;background:rgb(54,58,65)"></div><div class="b" style="left:277.0px;top:398.0px;width:8.0px;height:8.0px;background:rgb(63,68,74)"></div><div class="b" style="left:285.0px;top:398.0px;width:8.0px;height:8.0px;background:rgb(44,49,56)"></div><div class="b" style="left:293.0px;top:398.0px;width:8.0px;height:8.0px;background:rgb(44,49,56)"></div><div class="b" style="left:301.0px;top:398.0px;width:8.0px;height:8.0px;background:rgb(44,49,56)"></div><div class="b" style="left:309.0px;top:398.0px;width:8.0px;height:8.0px;background:rgb(44,49,56)"></div><div class="b" style="left:317.0px;top:398.0px;width:8.0px;height:8.0px;background:rgb(44,49,56)"></div><div class="b" style="left:325.0px;top:398.0px;width:8.0px;height:8.0px;background:rgb(44,49,56)"></div><div class="b" style="left:333.0px;top:398.0px;width:8.0px;height:8.0px;background:rgb(35,40,46)"></div><div class="b" style="left:341.0px;top:398.0px;width:8.0px;height:8.0px;background:rgb(44,49,56)"></div><div class="b" style="left:349.0px;top:398.0px;width:8.0px;height:8.0px;background:rgb(63,68,74)"></div><div class="b" style="left:357.0px;top:398.0px;width:8.0px;height:8.0px;background:rgb(44,49,56)"></div><div class="b" style="left:365.0px;top:398.0px;width:8.0px;height:8.0px;background:rgb(44,49,56)"></div><div class="b" style="left:373.0px;top:398.0px;width:8.0px;height:8.0px;background:rgb(63,68,74)"></div><div class="b" style="left:381.0px;top:398.0px;width:8.0px;height:8.0px;background:rgb(63,68,74)"></div><div class="b" style="left:389.0px;top:398.0px;width:8.0px;height:8.0px;background:rgb(35,40,46)"></div><div class="b" style="left:205.0px;top:382.0px;width:8.0px;height:8.0px;background:rgb(39,43,50)"></div><div class="b" style="left:293.0px;top:382.0px;width:8.0px;height:8.0px;background:rgb(39,43,50)"></div><div class="b" style="left:197px;top:236px;width:8px;height:8px;background:rgb(52,74,102)"></div><div class="b" style="left:205px;top:236px;width:8px;height:8px;background:rgb(76,92,114)"></div><div class="b" style="left:213px;top:236px;width:8px;height:8px;background:rgb(76,92,114)"></div><div class="b" style="left:221px;top:236px;width:8px;height:8px;background:rgb(52,74,102)"></div><div class="b" style="left:229px;top:236px;width:8px;height:8px;background:rgb(52,74,102)"></div><div class="b" style="left:237px;top:236px;width:8px;height:8px;background:rgb(76,92,114)"></div><div class="b" style="left:245px;top:236px;width:8px;height:8px;background:rgb(52,74,102)"></div><div class="b" style="left:253px;top:236px;width:8px;height:8px;background:rgb(52,74,102)"></div><div class="b" style="left:261px;top:236px;width:8px;height:8px;background:rgb(76,92,114)"></div><div class="b" style="left:269px;top:236px;width:8px;height:8px;background:rgb(52,74,102)"></div><div class="b" style="left:277px;top:236px;width:8px;height:8px;background:rgb(52,74,102)"></div><div class="b" style="left:285px;top:236px;width:8px;height:8px;background:rgb(76,92,114)"></div><div class="b" style="left:293px;top:236px;width:8px;height:8px;background:rgb(76,92,114)"></div><div class="b" style="left:301px;top:236px;width:8px;height:8px;background:rgb(30,52,84)"></div><div class="b" style="left:309px;top:236px;width:8px;height:8px;background:rgb(52,74,102)"></div><div class="b" style="left:317px;top:236px;width:8px;height:8px;background:rgb(52,74,102)"></div><div class="b" style="left:325px;top:236px;width:8px;height:8px;background:rgb(76,92,114)"></div><div class="b" style="left:333px;top:236px;width:8px;height:8px;background:rgb(52,74,102)"></div><div class="b" style="left:341px;top:236px;width:8px;height:8px;background:rgb(52,74,102)"></div><div class="b" style="left:349px;top:236px;width:8px;height:8px;background:rgb(52,74,102)"></div><div class="b" style="left:357px;top:236px;width:8px;height:8px;background:rgb(52,74,102)"></div><div class="b" style="left:365px;top:236px;width:8px;height:8px;background:rgb(52,74,102)"></div><div class="b" style="left:373px;top:236px;width:8px;height:8px;background:rgb(30,52,84)"></div><div class="b" style="left:381px;top:236px;width:8px;height:8px;background:rgb(76,92,114)"></div><div class="b" style="left:197px;top:244px;width:8px;height:8px;background:rgb(52,74,102)"></div><div class="b" style="left:205px;top:244px;width:8px;height:8px;background:rgb(76,92,114)"></div><div class="b" style="left:213px;top:244px;width:8px;height:8px;background:rgb(52,74,102)"></div><div class="b" style="left:221px;top:244px;width:8px;height:8px;background:rgb(52,74,102)"></div><div class="b" style="left:229px;top:244px;width:8px;height:8px;background:rgb(52,74,102)"></div><div class="b" style="left:237px;top:244px;width:8px;height:8px;background:rgb(76,92,114)"></div><div class="b" style="left:245px;top:244px;width:8px;height:8px;background:rgb(76,92,114)"></div><div class="b" style="left:253px;top:244px;width:8px;height:8px;background:rgb(52,74,102)"></div><div class="b" style="left:261px;top:244px;width:8px;height:8px;background:rgb(76,92,114)"></div><div class="b" style="left:269px;top:244px;width:8px;height:8px;background:rgb(76,92,114)"></div><div class="b" style="left:277px;top:244px;width:8px;height:8px;background:rgb(52,74,102)"></div><div class="b" style="left:285px;top:244px;width:8px;height:8px;background:rgb(76,92,114)"></div><div class="b" style="left:293px;top:244px;width:8px;height:8px;background:rgb(76,92,114)"></div><div class="b" style="left:301px;top:244px;width:8px;height:8px;background:rgb(52,74,102)"></div><div class="b" style="left:309px;top:244px;width:8px;height:8px;background:rgb(52,74,102)"></div><div class="b" style="left:317px;top:244px;width:8px;height:8px;background:rgb(52,74,102)"></div><div class="b" style="left:325px;top:244px;width:8px;height:8px;background:rgb(52,74,102)"></div><div class="b" style="left:333px;top:244px;width:8px;height:8px;background:rgb(52,74,102)"></div><div class="b" style="left:341px;top:244px;width:8px;height:8px;background:rgb(52,74,102)"></div><div class="b" style="left:349px;top:244px;width:8px;height:8px;background:rgb(76,92,114)"></div><div class="b" style="left:357px;top:244px;width:8px;height:8px;background:rgb(76,92,114)"></div><div class="b" style="left:365px;top:244px;width:8px;height:8px;background:rgb(52,74,102)"></div><div class="b" style="left:373px;top:244px;width:8px;height:8px;background:rgb(52,74,102)"></div><div class="b" style="left:381px;top:244px;width:8px;height:8px;background:rgb(52,74,102)"></div></div>
<div class="a" style="left:181px;top:2px;width:224px;height:36px;border:3px solid #ff0000;z-index:40"></div>
<svg style="left:388px;top:19px;z-index:20" width="10" height="7" viewBox="0 0 10 7"><path d="M0.8 1 L5 5.4 L9.2 1" fill="none" stroke="#a0a4aa" stroke-width="1.6"/></svg>
<div class="a" style="left:188px;top:415px;width:88px;height:41px;border:3px solid #ff0000;z-index:40"></div>
<!-- badges -->
<svg style="left:0;top:0;z-index:60" width="1" height="1"><path d="M411.2 43.3 C412.2 42.2 413.3 41.3 414.6 40.9 H417.3 V53.9 H414.4 V44.7 C413.4 45.0 412.2 45.2 411.2 45.2 Z" fill="#ffffff"/></svg>
<svg style="left:394px;top:26px;z-index:50" width="42" height="42" viewBox="0 0 42 42">
 <circle cx="21" cy="21" r="20.2" fill="#1a1f27" stroke="#b8bcc0" stroke-width="1.1"/>
 <circle cx="21" cy="21" r="18.4" fill="#ffffff"/>
 <circle cx="21" cy="21" r="17.4" fill="#ff0000"/>
</svg>
<svg style="left:264px;top:444px;z-index:50" width="42" height="42" viewBox="0 0 42 42">
 <circle cx="21" cy="21" r="20.2" fill="#1a1f27" stroke="#b8bcc0" stroke-width="1.1"/>
 <circle cx="21" cy="21" r="18.4" fill="#ffffff"/>
 <circle cx="21" cy="21" r="17.4" fill="#ff0000"/>
</svg>
</body></html>
